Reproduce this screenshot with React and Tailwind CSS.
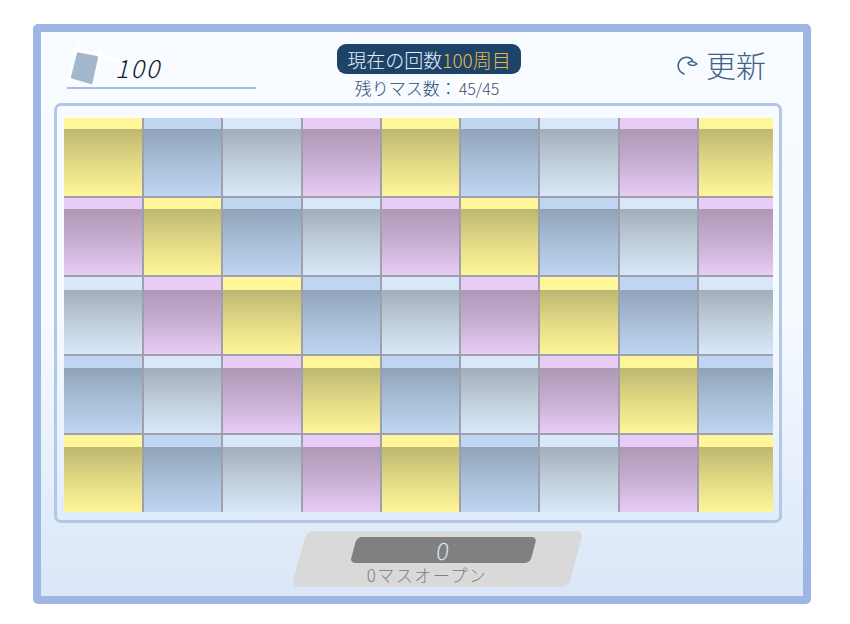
const palette = {
  Y: { band: "bg-[#fff599]", body: "bg-gradient-to-b from-[#bdb771] via-[#e2d985] to-[#fff599]" },
  B: { band: "bg-[#bfd5f0]", body: "bg-gradient-to-b from-[#8fa3b8] via-[#a9bfd8] to-[#bfd5f0]" },
  L: { band: "bg-[#d9e8f9]", body: "bg-gradient-to-b from-[#a2aeb9] via-[#c0ced9] to-[#d9e8f9]" },
  P: { band: "bg-[#e9ccf5]", body: "bg-gradient-to-b from-[#ae98b6] via-[#c8aed2] to-[#e9ccf5]" },
};
const order = ["Y", "B", "L", "P"];
const bandHeights = ["h-[11px]", "h-[11px]", "h-[13px]", "h-[12px]", "h-[12px]"];
const font = { fontFamily: '"Noto Sans CJK JP", "Noto Sans", sans-serif' };

function Cell({ kind, row, col }) {
  const p = palette[kind];
  return (
    <div className={`flex flex-col min-w-0 min-h-0 ${col < 8 ? "border-r-2" : ""} ${row < 4 ? "border-b-2" : ""} border-[#a09fae]`}>
      <div className={`${bandHeights[row]} shrink-0 ${p.band}`} />
      <div className={`flex-1 ${p.body}`} />
    </div>
  );
}

export default function App() {
  const cells = [];
  for (let r = 0; r < 5; r++) {
    for (let c = 0; c < 9; c++) {
      cells.push(<Cell key={`${r}-${c}`} kind={order[((c - r) % 4 + 4) % 4]} row={r} col={c} />);
    }
  }
  return (
    <div className="w-[850px] h-[624px] bg-white pt-[24px] pl-[33px] overflow-hidden" style={font}>
      <div className="w-[778px] h-[580px] box-border border-[8px] border-[#9db6e3] rounded-[5px] bg-gradient-to-b from-[#f8fbff] via-[#f6faff] to-[#dae7f8] flex flex-col">
        {/* header */}
        <div className="h-[71px] shrink-0 flex items-start pl-[26px] pr-[37px]">
          <div className="w-[189px] h-[57px] border-b-2 border-[#a9bde3] flex items-end pb-[2px] relative">
            <svg width="44" height="48" viewBox="0 0 44 48" className="shrink-0 overflow-visible">
              <path d="M13 2 L1 45 M6 12 L53 24 M35 12 L26 47" stroke="#ffffff" strokeWidth="3" fill="none" />
              <path d="M10 16 Q10.500 15 12 15.400 L30 19 Q31.500 19.500 31 21 L25.500 46 Q25 47.500 23.500 47 L5 41.500 Q3.500 41 4 39.500 Z" fill="#a3b7cd" />
            </svg>
            <span className="ml-[4px] mb-[2px] text-[25px] leading-[32px] italic font-light text-[#111827] tracking-[2px]">100</span>
          </div>
          <div className="ml-[81px] w-[184px] flex flex-col items-center pt-[12px]">
            <div className="w-[184px] h-[30px] rounded-[9px] bg-[#1d4468] flex items-center justify-center text-[19px] leading-none font-light text-[#e8f0fa] whitespace-nowrap">
              現在の回数<span className="text-[#eab93d]">100周目</span>
            </div>
            <div className="h-[28px] flex items-center text-[#2f5078] text-[17px] font-light whitespace-nowrap">
              残りマス数：<span className="ml-[-2px] px-[4px] bg-white rounded-full text-[16px]">45/45</span>
            </div>
          </div>
          <div className="ml-auto flex items-center pt-[15px] text-[#3d6289] text-[30px] leading-[34px] font-light whitespace-nowrap">
            <svg width="24" height="24" viewBox="0 0 24 24" className="mr-[7px] mt-[2px]">
              <path d="M9 21 C2 18 1 9 8 5 C13 3 17 5 18 9 M22 11 C19 8 15 8 13 10 C15 13 19 13 22 11 Z" fill="none" stroke="#3d6289" strokeWidth="1.500" strokeLinecap="round" />
            </svg>
            更新
          </div>
        </div>

        {/* board panel */}
        <div className="ml-[13px] w-[728px] h-[420px] shrink-0 box-border border-[3px] border-[#b3c8e8] rounded-[7px] pt-[12px] pl-[7px]">
          <div className="w-[709px] h-[394px] grid grid-cols-[80px_repeat(7,79.3px)_74px] grid-rows-[79.5px_repeat(3,79.3px)_76.6px]">{cells}</div>
        </div>

        {/* bottom */}
        <div className="flex justify-center pt-[8px]">
          <div className="w-[277px] h-[56px] ml-[30px] -skew-x-[15deg] rounded-[7px] bg-[#d9d9d9] flex flex-col items-center pt-[6px]">
            <div className="ml-[6px] w-[180px] h-[26px] rounded-[5px] bg-[#808080] flex items-center justify-center text-[#cfe2f3] text-[24px] leading-none font-light">
              <span className="skew-x-[8deg]">0</span>
            </div>
            <div className="skew-x-[15deg] mt-[1px] ml-[-12px] text-[#808080] text-[17px] leading-[22px] font-light tracking-[1.500px] whitespace-nowrap">0マスオープン</div>
          </div>
        </div>
      </div>
    </div>
  );
}
